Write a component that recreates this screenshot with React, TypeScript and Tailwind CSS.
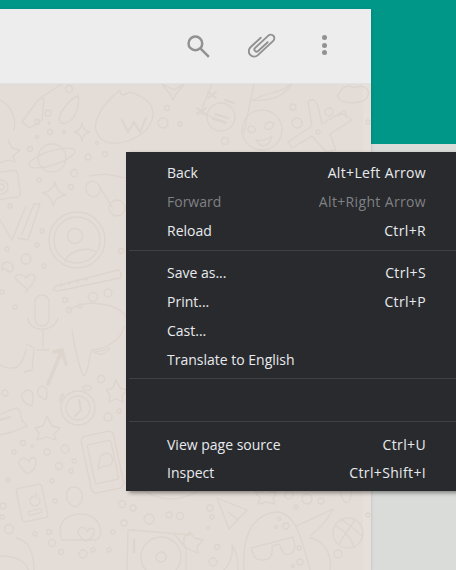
const FONT = "font-['Open_Sans','Noto_Sans',sans-serif]";

type Item = { label: string; hint?: string; disabled?: boolean };

const NAV: Item[] = [
  { label: 'Back', hint: 'Alt+Left Arrow' },
  { label: 'Forward', hint: 'Alt+Right Arrow', disabled: true },
  { label: 'Reload', hint: 'Ctrl+R' },
];

const PAGE: Item[] = [
  { label: 'Save as...', hint: 'Ctrl+S' },
  { label: 'Print...', hint: 'Ctrl+P' },
  { label: 'Cast...' },
  { label: 'Translate to English' },
];

const DEV: Item[] = [
  { label: 'View page source', hint: 'Ctrl+U' },
  { label: 'Inspect', hint: 'Ctrl+Shift+I' },
];

// x, y, r of the small bubbles scattered over the wallpaper
const DOTS: number[][] = [
  [69, 89, 3.5], [48, 113, 3], [37, 122, 2.5], [50, 132, 2.5], [49, 123, 1], [64, 132, 1.5], [37, 137, 1.5],
  [30, 149, 2.5], [88, 157, 3], [105, 154, 2.5], [97, 143, 1.5], [74, 173, 3.5], [39, 180, 2], [71, 187, 2.5],
  [10, 206, 2], [42, 231, 2], [37, 245, 2], [7, 249, 2], [26, 259, 5], [44, 266, 2], [121, 251, 2.5],
  [93, 297, 4.5], [108, 293, 4], [65, 300, 2.5], [69, 310, 2.5], [80, 306, 2], [15, 307, 2], [2, 292, 2],
  [101, 379, 3.5], [5, 393, 3], [108, 417, 4], [119, 411, 2], [23, 443, 2.5], [14, 452, 2], [32, 446, 1],
  [47, 452, 3], [65, 449, 4], [59, 466, 3.5], [74, 461, 2], [71, 471, 2], [8, 480, 2], [52, 481, 2],
  [55, 501, 2], [3, 506, 3], [2, 517, 2], [9, 529, 4.5], [35, 534, 2], [49, 532, 2.5], [52, 543, 3.5],
  [61, 552, 2.5], [83, 554, 4], [93, 550, 2], [109, 550, 2], [113, 532, 2], [122, 504, 3.5], [124, 523, 3],
  [133, 508, 3], [149, 519, 5], [169, 515, 3], [180, 516, 3.5], [210, 508, 3], [212, 517, 2], [208, 528, 1.5],
  [217, 547, 2.5], [213, 562, 4], [289, 495, 4], [307, 499, 5], [321, 501, 3], [296, 507, 2], [338, 554, 4],
  [368, 515, 2], [276, 527, 1.5], [286, 526, 3], [279, 519, 1.5], [299, 548, 2], [300, 562, 3], [293, 566, 1.5],
  [293, 107, 3], [329, 112, 4], [297, 123, 5], [167, 108, 2.5], [163, 123, 5], [180, 124, 2], [225, 141, 3.5],
  [318, 132, 2], [368, 122, 2],
];

function Wallpaper() {
  return (
    <svg viewBox="0 84 371 486" className="block h-full w-full" fill="none" stroke="#dcd4cd" strokeWidth="1.3" strokeLinecap="round" strokeLinejoin="round">
      <rect x="363" y="84" width="8" height="486" fill="#e7dfd9" stroke="none" />
      {DOTS.map(([x, y, r]) => (
        <circle key={`${x}-${y}`} cx={x} cy={y} r={r} />
      ))}

      {/* top left: moon, rock, comet, heart */}
      <path d="M0 100 C10 104 17 118 14 130" />
      <path d="M22 122 L38 100 L44 98 L42 120 L30 128 Z" />
      <path d="M40 98 L62 84" />
      <path d="M60 122 C56 116 70 98 78 96 C80 104 76 120 66 123 Q62 124 60 122 Z" />
      <path d="M96 122 C100 108 112 96 120 90 C120 98 126 94 130 92 C156 100 158 116 146 130 C136 140 118 146 106 142 C98 138 94 130 96 122 Z" />
      <path d="M122 120 L128 132 L134 122 L140 132 L146 118" strokeWidth="2" />

      {/* planet, sparkles, star, camera, glasses */}
      <circle cx="52" cy="158" r="14" />
      <ellipse cx="52" cy="158" rx="24" ry="7" transform="rotate(-18 52 158)" />
      <path d="M82 123 Q83 131 90 132 Q83 133 82 141 Q81 133 74 132 Q81 131 82 123 Z" />
      <path d="M8 140 L12 148 L20 150 L13 156 L15 162 L8 160 L0 163" />
      <rect x="-14" y="172" width="33" height="27" rx="4" transform="rotate(-8 2 185)" />
      <circle cx="1" cy="187" r="7" />
      <circle cx="1" cy="187" r="3" />
      <path d="M55 182 Q56 192 66 195 Q56 196 53 206 Q52 196 42 193 Q52 192 55 182 Z" />
      <ellipse cx="93" cy="189" rx="7" ry="8" transform="rotate(-30 93 189)" />
      <ellipse cx="117" cy="208" rx="8" ry="8" />
      <path d="M98 184 L112 207" />
      <path d="M90 176 Q105 172 124 178" />

      {/* pencil, profile, band, heart, mic */}
      <path d="M0 220 L12 240 L26 206 M18 238 L28 240 L40 204 L34 204 L22 234" />
      <circle cx="77" cy="240" r="28" />
      <circle cx="77" cy="240" r="23" />
      <circle cx="75" cy="236" r="7.5" />
      <path d="M65 262 C68 250 90 246 96 252" />
      <path d="M56 286 L118 270 Q123 272 120 278 L58 291 Q50 290 56 286 Z" />
      <path d="M61 285 h.1 M69 283 h.1 M77 281 h.1 M86 279 h.1" strokeWidth="3" />
      <path d="M26 288 C18 282 14 278 16 276 C20 272 24 276 26 278 C28 274 34 272 35 278 C35 282 30 286 26 292 Z" />
      <path d="M8 262 Q0 262 2 270 L4 268 Q12 276 13 268 Q14 264 8 262 Z" />
      <rect x="35" y="295" width="14" height="31" rx="7" />
      <path d="M28 318 C28 332 54 334 58 318 M43 330 V350 M37 350 h12" />

      {/* mid bottom: dog, arrow, quotes */}
      <path d="M70 310 C80 300 120 300 128 320" />
      <path d="M72 330 C74 345 80 372 84 376 C90 370 88 356 92 350 C104 350 122 340 124 326" />
      <path d="M94 352 Q104 358 110 348 Q100 352 94 352 Z" />
      <path d="M0 365 C14 372 22 368 26 350 M26 344 L34 348 L32 370 L24 372" />
      <path d="M48 384 L62 350 L54 352 M62 350 L66 364" strokeWidth="3.5" />
      <path d="M28 390 Q20 392 22 398 Q24 404 32 406 Q34 398 32 392 Z" />
      <path d="M42 386 Q36 388 38 394 Q40 398 46 400 Q48 392 46 388 Z" />

      {/* stopwatch, stars, speech */}
      <circle cx="78" cy="408" r="17" />
      <circle cx="78" cy="408" r="12" />
      <path d="M79 400 L81 410 L75 416" strokeWidth="2" />
      <ellipse cx="87" cy="388" rx="4" ry="2.5" />
      <path d="M60 398 Q62 392 64 394 L60 402 Z" />
      <path d="M116 380 L120 388 L127 390 L122 396 L123 402 L116 399 L109 402 L110 395 L106 390 L113 388 Z" />
      <path d="M47 416 L52 426 L60 428 L54 434 L56 440 L47 437 L37 440 L39 433 L35 428 L43 426 Z" />
      <path d="M-4 416 L16 408 Q20 408 22 420 L27 426 L12 432 L-4 436" />
      <path d="M0 420 L10 417" strokeWidth="2" />

      {/* heart, phone, passbook, egg, blob */}
      <path d="M27 474 C20 468 17 462 20 460 C24 456 28 460 29 462 C31 456 36 456 36 462 C36 468 32 472 27 474 Z" />
      <rect x="86" y="433" width="33" height="58" rx="5" transform="rotate(-12 103 462)" />
      <rect x="91" y="442" width="24" height="40" rx="2" transform="rotate(-12 103 462)" />
      <path d="M100 458 a6.5 6.5 0 1 1 4 8 l-6 3 Z" />
      <rect x="19" y="486" width="26" height="34" rx="3" transform="rotate(-12 32 503)" />
      <path d="M34 496 a5 5 0 1 0 5 2 M36 493 v5" />
      <rect x="28" y="510" width="14" height="4" rx="2" transform="rotate(-15 35 512)" />
      <path d="M74 487 C82 487 84 497 81 502 Q76 510 70 504 C64 498 66 487 74 487 Z" />
      <path d="M60 530 C60 515 84 508 96 520 C104 530 100 538 96 540 L62 540 Q60 536 60 530 Z" />
      <path d="M85 541 C78 536 76 530 80 528 C84 526 87 530 87 532 C90 526 96 528 94 533 C93 538 88 540 85 541 Z" />
      <path d="M0 556 C14 556 26 560 28 570 M16 538 C28 540 34 552 34 570" />

      {/* top middle: star, card, smiley, banana, cloud */}
      <path d="M162 84 L174 90 L184 84 L176 94 L173 100 L170 94 Z" />
      <path d="M202 108 L212 84 M254 84 L244 132" />
      <path d="M197 112 L226 122" />
      <path d="M208 92 L216 98 M216 92 L208 98 M197 108 L206 114 M206 108 L197 114" strokeWidth="2" />
      <path d="M225 100 L234 103" strokeWidth="2" />
      <circle cx="221" cy="117" r="14" />
      <path d="M215 114 L228 118 M213 119 L226 123" strokeWidth="2" />
      <path d="M252 100 C272 102 284 96 292 84 M252 100 C270 92 284 92 290 84" />
      <path d="M340 92 C344 84 352 86 354 88 C362 84 372 88 367 98 C362 104 346 104 340 100 Q336 96 340 92 Z" />

      {/* heart eyes face, plane */}
      <circle cx="262" cy="130" r="20" />
      <path d="M248 128 C250 124 254 126 256 130 C252 134 248 134 248 128 Z" />
      <path d="M264 126 C268 120 272 122 274 124 C272 130 266 132 264 126 Z" />
      <path d="M256 140 Q264 142 272 136 Q270 146 262 146 Q258 144 256 140 Z" />
      <path d="M288 142 L312 126 L308 102 Q314 96 318 106 L322 124 L342 112 Q346 108 346 116 Q350 118 352 120 L330 134 L336 150 L326 152 L312 136 L292 148 Z" />
      <path d="M338 116 Q342 112 346 116" />

      {/* under the menu */}
      <path d="M137 486 Q170 512 206 486" />
      <path d="M217 498 L247 510 L229 529 Z" />
      <path d="M228 512 L238 520" />
      <path d="M255 492 h8 l3 -3 l3 3 h8 l-4 6 l2 6 l-9 -2 l-8 2 l2 -6 Z" />
      <path d="M340 490 L352 490 L350 500 Q346 506 342 498 Z" />
      <path d="M244 570 C242 540 250 515 276 512 C296 512 302 540 310 570" />
      <path d="M251 548 L293 537 L295 546 Q294 556 284 554 L279 544 L272 546 Q274 560 262 560 Q256 560 254 556 Z" />
      <path d="M296 526 C310 520 326 512 333 509 C328 520 318 530 310 536" />
      <path d="M310 538 C325 540 332 556 330 570" />
      <circle cx="348" cy="533" r="15" />
      <path d="M336 526 Q350 534 354 547 M342 520 Q354 528 362 536 M355 520 Q346 532 339 544" />

      {/* turntable */}
      <path d="M127 570 L128 530 Q128 530 132 530 L190 535" />
      <circle cx="161" cy="557" r="20" />
      <circle cx="161" cy="557" r="5" />
      <path d="M175 535 L186 548 L186 570" />
      <path d="M134 540 v12" strokeWidth="2.5" />
      <path d="M190 532 L194 538 L203 540 L197 547 L198 553 L190 550 L184 546 L184 538 Z" />
      <path d="M224 570 Q234 560 232 545 Q238 552 238 570" />
    </svg>
  );
}

function SearchIcon() {
  return (
    <svg viewBox="0 0 26 26" className="h-[27px] w-[27px]" fill="none" stroke="#919191" strokeWidth="2.4">
      <circle cx="10" cy="10" r="6.6" />
      <path d="M14.8 14.8 L23 23" />
    </svg>
  );
}

function ClipIcon() {
  return (
    <svg viewBox="-15 -15 30 30" className="h-[30px] w-[30px]" fill="none" stroke="#919191" strokeWidth="1.9" strokeLinecap="round">
      <path
        transform="rotate(47)"
        d="M0.4 -6 V7 a2.2 2.2 0 0 1 -4.4 0 V-11 a3.6 3.6 0 0 1 7.2 0 V10 a5.4 5.4 0 0 1 -10.8 0 V-4"
      />
    </svg>
  );
}

function MoreIcon() {
  return (
    <div className="mb-[2px] flex w-[5px] flex-col gap-[2.6px]">
      <span className="h-[5px] w-[5px] rounded-full bg-[#919191]" />
      <span className="h-[5px] w-[5px] rounded-full bg-[#919191]" />
      <span className="h-[5px] w-[5px] rounded-full bg-[#919191]" />
    </div>
  );
}

function Row({ item, short }: { item: Item; short?: boolean }) {
  return (
    <div
      className={`flex items-center justify-between pl-[41px] pr-[30px] ${short ? 'h-[28.5px]' : 'h-[29px]'} ${
        item.disabled ? 'text-[#7f8184]' : 'text-[#e8eaed]'
      }`}
    >
      <span>{item.label}</span>
      {item.hint && <span className="tracking-[0.35px]">{item.hint}</span>}
    </div>
  );
}

function Separator({ className }: { className: string }) {
  return <div className={`ml-[3px] h-px bg-[#3f4043] ${className}`} />;
}

export default function App() {
  return (
    <div className={`relative h-[570px] w-[456px] overflow-hidden bg-[#d9dcd8] ${FONT}`}>
      <div className="absolute inset-x-0 top-0 h-[144px] bg-[#009688]" />

      <main className="relative mt-[9px] flex h-[561px] w-[371px] flex-col shadow-[0_1px_3px_rgba(0,0,0,0.15)]">
        <header className="flex h-[75px] shrink-0 items-center border-b border-[#e2e2e2] bg-[#ededed] pl-[185px]">
          <SearchIcon />
          <div className="ml-[36px] flex items-center">
            <ClipIcon />
          </div>
          <div className="ml-[43.5px] flex items-center">
            <MoreIcon />
          </div>
        </header>
        <div className="min-h-0 flex-1 bg-[#e4dcd6]">
          <Wallpaper />
        </div>
      </main>

      <div className="absolute left-[126px] top-[152px] h-[339px] w-[330px] bg-[#292a2d] pt-[6px] text-[14px] shadow-[3px_2px_4px_rgba(0,0,0,0.4)]">
        {NAV.map((item) => (
          <Row key={item.label} item={item} />
        ))}
        <Separator className="mb-[6.5px] mt-[5px]" />
        {PAGE.map((item) => (
          <Row key={item.label} item={item} />
        ))}
        <Separator className="mt-[4.5px]" />
        <div className="h-[42px]" />
        <Separator className="mb-[8px]" />
        {DEV.map((item) => (
          <Row key={item.label} item={item} short />
        ))}
      </div>
    </div>
  );
}
